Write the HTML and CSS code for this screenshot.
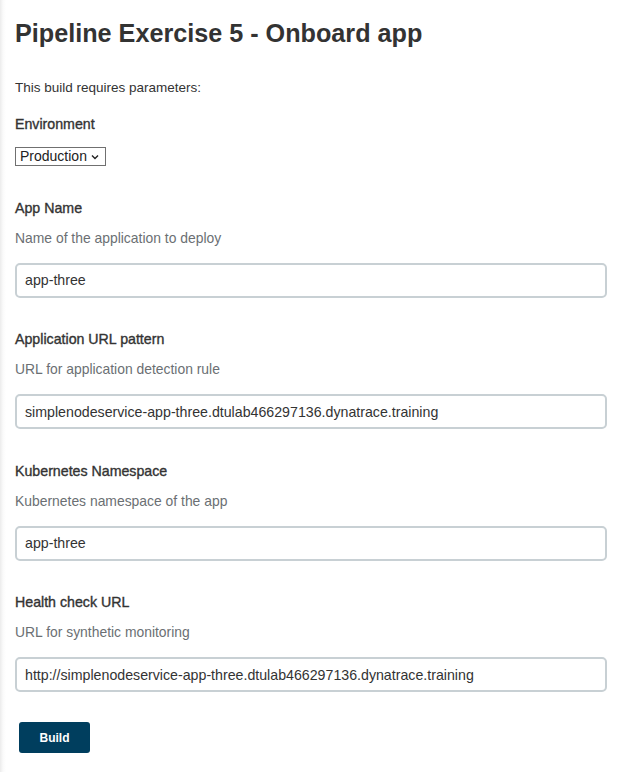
FILE: index.html
```html
<!DOCTYPE html>
<html>
<head>
<meta charset="utf-8">
<link rel="stylesheet" href="styles.css">
</head>
<body>
<main class="page">
  <h1 class="title">Pipeline Exercise 5 - Onboard app</h1>
  <p class="intro">This build requires parameters:</p>

  <section class="field first">
    <div class="label">Environment</div>
    <div class="select-wrap">
      <select class="select"><option>Production</option></select>
      <svg class="chev" width="8" height="6" viewBox="0 0 8 6"><path d="M1 1.5 L4 4.5 L7 1.5" fill="none" stroke="#222" stroke-width="1.4"/></svg>
    </div>
  </section>

  <section class="field">
    <div class="label">App Name</div>
    <div class="desc">Name of the application to deploy</div>
    <input class="input" type="text" value="app-three">
  </section>

  <section class="field">
    <div class="label">Application URL pattern</div>
    <div class="desc">URL for application detection rule</div>
    <input class="input" type="text" value="simplenodeservice-app-three.dtulab466297136.dynatrace.training">
  </section>

  <section class="field">
    <div class="label">Kubernetes Namespace</div>
    <div class="desc">Kubernetes namespace of the app</div>
    <input class="input" type="text" value="app-three">
  </section>

  <section class="field">
    <div class="label">Health check URL</div>
    <div class="desc">URL for synthetic monitoring</div>
    <input class="input" type="text" value="http://simplenodeservice-app-three.dtulab466297136.dynatrace.training">
  </section>

  <div class="actions">
    <button class="build" type="button">Build</button>
  </div>
</main>
</body>
</html>
```
FILE: styles.css
```css
html, body {
  margin: 0;
  padding: 0;
}
body {
  background: linear-gradient(to right, #ececec 0px, #fafafa 3px, #ffffff 6px);
  font-family: "Liberation Sans", Arial, sans-serif;
  color: #333;
  min-height: 772px;
}
.page {
  padding: 19px 28px 0 15px;
}
.title {
  margin: 0;
  font-size: 25.2px;
  line-height: 28px;
  font-weight: bold;
  color: #333;
}
.intro {
  margin: 32px 0 0;
  font-size: 13.5px;
  line-height: 18px;
  color: #333;
}
.field {
  margin-top: 32.5px;
  display: flex;
  flex-direction: column;
  align-items: stretch;
}
.field.first {
  margin-top: 18px;
  align-items: flex-start;
}
.label {
  font-size: 14.2px;
  line-height: 18px;
  color: #333;
  -webkit-text-stroke: 0.35px #333;
}
.desc {
  margin-top: 12px;
  font-size: 13.9px;
  line-height: 18px;
  color: #6b6f73;
}
.select-wrap {
  margin-top: 14px;
  display: inline-flex;
  align-items: center;
  height: 19px;
  box-sizing: border-box;
  border: 1px solid #707070;
  background: #fff;
  padding: 0 6px 0 0;
}
.select {
  appearance: none;
  -webkit-appearance: none;
  border: none;
  background: transparent;
  font-family: "Liberation Sans", Arial, sans-serif;
  font-size: 14px;
  color: #222;
  padding: 0 4px 0 4px;
  margin: 0;
  height: 17px;
  line-height: 17px;
  outline: none;
}
.chev {
  display: block;
}
.input {
  margin-top: 16px;
  box-sizing: border-box;
  height: 35px;
  width: 592px;
  border: 2px solid #c8d0d4;
  border-radius: 5px;
  padding: 0 8px;
  font-family: "Liberation Sans", Arial, sans-serif;
  font-size: 14.2px;
  color: #333;
  background: #fff;
  outline: none;
}
.actions {
  margin-top: 30px;
  padding-left: 4px;
}
.build {
  width: 71px;
  height: 31px;
  border: none;
  border-radius: 3px;
  background: #003e5e;
  color: #fff;
  font-family: "Liberation Sans", Arial, sans-serif;
  font-size: 12px;
  font-weight: bold;
  padding: 0;
}
```
